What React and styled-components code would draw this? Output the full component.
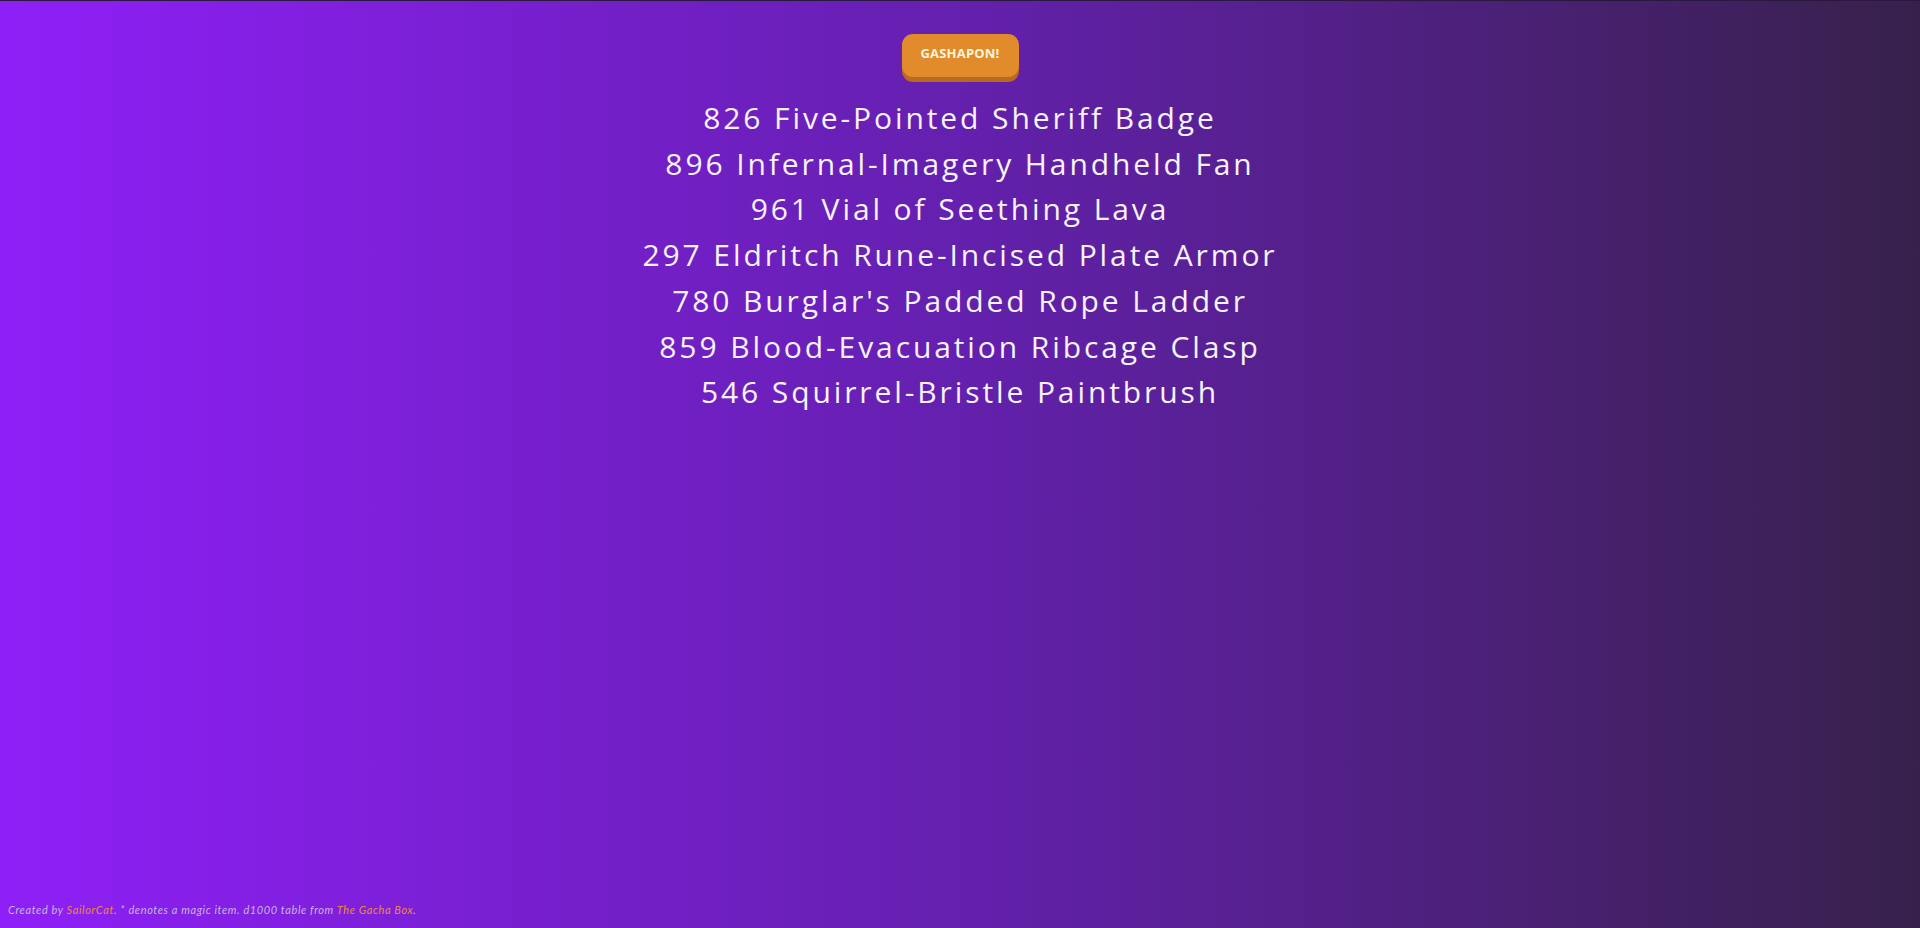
import React from "react";
import styled, {createGlobalStyle} from "styled-components";

const GlobalStyle = createGlobalStyle`
  html, body {
    margin: 0;
    padding: 0;
    height: 100%;
  }

  #root {
    min-height: 100%;
  }
`;

const Page = styled.div`
  box-sizing: border-box;
  min-height: 928px;
  border-top: 1px solid #2b1840;
  background: linear-gradient(to right, #8f1ff7 0%, #6420ae 50%, #37214b 100%);
  display: flex;
  flex-direction: column;
  align-items: center;
  font-family: "Lato", "Open Sans", sans-serif;
  color: #fff;
`;

const Main = styled.main`
  flex: 1;
  display: flex;
  flex-direction: column;
  align-items: center;
  padding-top: 33px;
`;

const GachaButton = styled.button`
  width: 117px;
  height: 43px;
  padding: 0 0 5px;
  border: none;
  border-radius: 11px;
  background: #e28b2c;
  box-shadow: 0 5px 0 #b86a1f;
  color: #fff4dc;
  font-family: "Open Sans", "Liberation Sans", sans-serif;
  font-weight: 700;
  font-size: 13px;
  letter-spacing: 0.2px;
  cursor: pointer;
`;

const ItemList = styled.ul`
  list-style: none;
  margin: 18px 0 0;
  padding: 0;
  text-align: center;
`;

const Item = styled.li`
  font-family: "Open Sans", "Lato", sans-serif;
  font-size: 30px;
  font-weight: 400;
  line-height: 45.7px;
  letter-spacing: 2.9px;
  color: #f7f2ff;
`;

const Footer = styled.footer`
  align-self: stretch;
  padding: 0 8px 12px;
  font-family: "Lato", "Open Sans", sans-serif;
  font-style: italic;
  font-size: 11px;
  letter-spacing: 0.6px;
  color: #c6b5dd;
`;

const FooterLink = styled.a`
  color: #e98b3c;
  text-decoration: none;
`;

const items = [
    "826 Five-Pointed Sheriff Badge",
    "896 Infernal-Imagery Handheld Fan",
    "961 Vial of Seething Lava",
    "297 Eldritch Rune-Incised Plate Armor",
    "780 Burglar's Padded Rope Ladder",
    "859 Blood-Evacuation Ribcage Clasp",
    "546 Squirrel-Bristle Paintbrush",
];

const App = () => {
    return (
        <>
            <GlobalStyle/>
            <Page>
                <Main>
                    <GachaButton>GASHAPON!</GachaButton>
                    <ItemList>
                        {items.map((item) => (
                            <Item key={item}>{item}</Item>
                        ))}
                    </ItemList>
                </Main>
                <Footer>
                    Created by <FooterLink href="#">SailorCat</FooterLink>. * denotes a magic item. d1000 table
                    from <FooterLink href="#">The Gacha Box</FooterLink>.
                </Footer>
            </Page>
        </>
    );
};

export default App;
